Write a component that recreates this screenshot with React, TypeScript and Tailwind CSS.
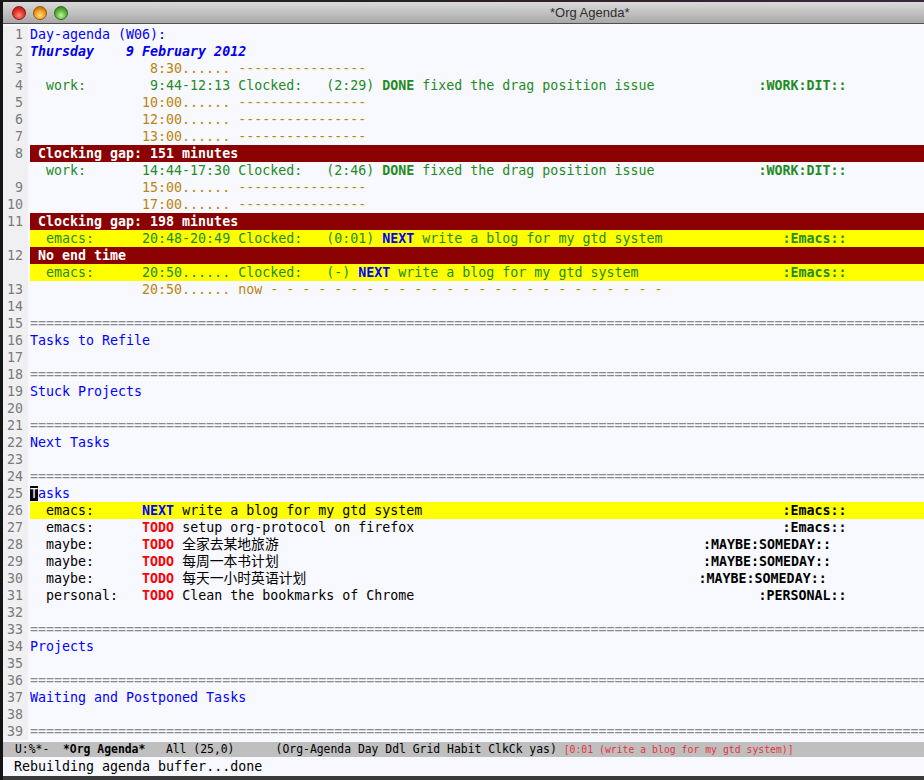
import React from "react";

const sp = (n: number) => " ".repeat(Math.max(0, n));
const TAG_END = 102;

function Row({
  n,
  bg = "",
  children,
}: {
  n?: number;
  bg?: string;
  children?: React.ReactNode;
}) {
  return (
    <div className="flex h-[17px] shrink-0 leading-[17px]">
      <div className="w-[25px] shrink-0 bg-[#f0f0f2] pr-[5px] text-right text-[#7a7a7a]">
        {n}
      </div>
      <div className="w-[2px] shrink-0" />
      <div className={`flex-1 overflow-hidden whitespace-pre ${bg}`}>
        {children}
      </div>
    </div>
  );
}

function Grid({ n, time }: { n: number; time: string }) {
  return (
    <Row n={n}>
      <span className="text-[#b8860b]">
        {(time + "......").padStart(25) + " " + "-".repeat(16)}
      </span>
    </Row>
  );
}

function Sep({ n }: { n: number }) {
  return (
    <Row n={n}>
      <span className="text-[#8a8a8a]">{"=".repeat(112)}</span>
    </Row>
  );
}

function Header({ n, text }: { n: number; text: string }) {
  return (
    <Row n={n}>
      <span className="text-[#0000ff]">{text}</span>
    </Row>
  );
}

function Gap({ n, text }: { n: number; text: string }) {
  return (
    <Row n={n} bg="bg-[#8b0000]">
      <span className="font-bold text-white">{" " + text}</span>
    </Row>
  );
}

function Clock({
  who,
  range,
  dur,
  kw,
  title,
  tag,
  yellow = false,
}: {
  who: string;
  range: string;
  dur: string;
  kw: "DONE" | "NEXT";
  title: string;
  tag: string;
  yellow?: boolean;
}) {
  const prefix =
    "  " + (who + ":").padEnd(12) + range.padStart(11) + " Clocked:   " + dur + " ";
  const used = prefix.length + kw.length + 1 + title.length;
  return (
    <Row bg={yellow ? "bg-[#ffff00]" : ""}>
      <span className="text-[#228b22]">{prefix}</span>
      <span
        className={
          kw === "NEXT" ? "font-bold text-[#0000ff]" : "font-bold text-[#228b22]"
        }
      >
        {kw}
      </span>
      <span className="text-[#228b22]">
        {" " + title + sp(TAG_END - tag.length - used)}
      </span>
      <span className="font-bold text-[#228b22]">{tag}</span>
    </Row>
  );
}

function Task({
  n,
  who,
  kw,
  title,
  tag,
  cjk = false,
  pad,
  yellow = false,
}: {
  n: number;
  who: string;
  kw: "TODO" | "NEXT";
  title: string;
  tag: string;
  cjk?: boolean;
  pad?: number;
  yellow?: boolean;
}) {
  const spaces = pad ?? TAG_END - tag.length - (19 + title.length);
  return (
    <Row n={n} bg={yellow ? "bg-[#ffff00]" : ""}>
      <span className="text-black">{"  " + (who + ":").padEnd(12)}</span>
      <span
        className={
          kw === "NEXT" ? "font-bold text-[#0000ff]" : "font-bold text-[#ff0000]"
        }
      >
        {kw}
      </span>
      <span className="text-black"> </span>
      {cjk ? (
        <span className="text-[13.8px] text-black">{title}</span>
      ) : (
        <span className="text-black">{title}</span>
      )}
      <span>{sp(spaces)}</span>
      <span className="font-bold text-black">{tag}</span>
    </Row>
  );
}

function Light({ color }: { color: string }) {
  return <div className={`h-[14px] w-[14px] rounded-full ${color}`} />;
}

export default function App() {
  return (
    <div className="flex h-[780px] w-[924px] flex-col overflow-hidden bg-[#3a3a3a]">
      <div className="h-[2px] shrink-0 bg-[linear-gradient(90deg,#1c1c1c,#3a2438)]" />
      <div className="flex flex-1 overflow-hidden">
        <div className="w-[3px] shrink-0 bg-[#141414]" />
        <div className="flex w-[921px] flex-col">
          {/* title bar */}
          <div className="flex h-[22px] shrink-0 items-center border-b border-[#4f4f4f] bg-[linear-gradient(180deg,#dadada,#a8a8a8)] pl-[9px]">
            <div className="flex gap-[7px]">
              <Light color="border border-[#8a1a14] bg-[radial-gradient(circle_at_50%_70%,#ff8c7a_0%,#e2342a_50%,#9c150f_100%)]" />
              <Light color="border border-[#9a5a08] bg-[radial-gradient(circle_at_50%_70%,#ffe08a_0%,#f09a1a_50%,#a45c08_100%)]" />
              <Light color="border border-[#2f6e1c] bg-[radial-gradient(circle_at_50%_70%,#c6f29a_0%,#5cb63a_50%,#2d6d18_100%)]" />
            </div>
            <span className="ml-[482px] font-['Liberation_Sans',sans-serif] text-[13px] text-[#2e2e2e]">
              *Org Agenda*
            </span>
          </div>

          {/* buffer */}
          <div className="flex h-[718px] shrink-0 flex-col overflow-hidden bg-[#f8f8ff] pt-[2px] font-['DejaVu_Sans_Mono','Noto_Sans_CJK_SC',monospace] text-[13.3px]">
            <Header n={1} text="Day-agenda (W06):" />
            <Row n={2}>
              <span className="font-bold italic text-[#0000ee]">
                Thursday    9 February 2012
              </span>
            </Row>
            <Grid n={3} time="8:30" />
            <Row n={4}>
              <span className="text-[#228b22]">
                {"  work:        9:44-12:13 Clocked:   (2:29) "}
              </span>
              <span className="font-bold text-[#228b22]">DONE</span>
              <span className="text-[#228b22]">
                {" fixed the drag position issue" + sp(13)}
              </span>
              <span className="font-bold text-[#228b22]">:WORK:DIT::</span>
            </Row>
            <Grid n={5} time="10:00" />
            <Grid n={6} time="12:00" />
            <Grid n={7} time="13:00" />
            <Gap n={8} text="Clocking gap: 151 minutes" />
            <Clock
              who="work"
              range="14:44-17:30"
              dur="(2:46)"
              kw="DONE"
              title="fixed the drag position issue"
              tag=":WORK:DIT::"
            />
            <Grid n={9} time="15:00" />
            <Grid n={10} time="17:00" />
            <Gap n={11} text="Clocking gap: 198 minutes" />
            <Clock
              who="emacs"
              range="20:48-20:49"
              dur="(0:01)"
              kw="NEXT"
              title="write a blog for my gtd system"
              tag=":Emacs::"
              yellow
            />
            <Gap n={12} text="No end time" />
            <Clock
              who="emacs"
              range="20:50......"
              dur="(-)"
              kw="NEXT"
              title="write a blog for my gtd system"
              tag=":Emacs::"
              yellow
            />
            <Row n={13}>
              <span className="text-[#b8860b]">
                {"20:50......".padStart(25) + " now" + " -".repeat(25)}
              </span>
            </Row>
            <Row n={14} />
            <Sep n={15} />
            <Header n={16} text="Tasks to Refile" />
            <Row n={17} />
            <Sep n={18} />
            <Header n={19} text="Stuck Projects" />
            <Row n={20} />
            <Sep n={21} />
            <Header n={22} text="Next Tasks" />
            <Row n={23} />
            <Sep n={24} />
            <Row n={25}>
              <span className="bg-black text-[#f8f8ff]">T</span>
              <span className="text-[#0000ff]">asks</span>
            </Row>
            <Task
              n={26}
              who="emacs"
              kw="NEXT"
              title="write a blog for my gtd system"
              tag=":Emacs::"
              yellow
            />
            <Task
              n={27}
              who="emacs"
              kw="TODO"
              title="setup org-protocol on firefox"
              tag=":Emacs::"
            />
            <Task
              n={28}
              who="maybe"
              kw="TODO"
              title="全家去某地旅游"
              tag=":MAYBE:SOMEDAY::"
              cjk
              pad={53}
            />
            <Task
              n={29}
              who="maybe"
              kw="TODO"
              title="每周一本书计划"
              tag=":MAYBE:SOMEDAY::"
              cjk
              pad={53}
            />
            <Task
              n={30}
              who="maybe"
              kw="TODO"
              title="每天一小时英语计划"
              tag=":MAYBE:SOMEDAY::"
              cjk
              pad={49}
            />
            <Task
              n={31}
              who="personal"
              kw="TODO"
              title="Clean the bookmarks of Chrome"
              tag=":PERSONAL::"
            />
            <Row n={32} />
            <Sep n={33} />
            <Header n={34} text="Projects" />
            <Row n={35} />
            <Sep n={36} />
            <Header n={37} text="Waiting and Postponed Tasks" />
            <Row n={38} />
            <Sep n={39} />
          </div>

          {/* mode line */}
          <div className="h-[15px] shrink-0 overflow-hidden whitespace-pre bg-[#bfbfbf] pl-[12px] font-['DejaVu_Sans_Mono',monospace] text-[11.4px] leading-[15px] text-black">
            <span>{"U:%*-  "}</span>
            <span className="font-bold">*Org Agenda*</span>
            <span>
              {"   All (25,0)      (Org-Agenda Day Ddl Grid Habit ClkCk yas) "}
            </span>
            <span className="text-[9.8px] text-[#e8323c]">
              [0:01 (write a blog for my gtd system)]
            </span>
          </div>

          {/* echo area */}
          <div className="h-[19px] shrink-0 whitespace-pre bg-[#f8f8ff] pl-[11px] font-['DejaVu_Sans_Mono',monospace] text-[13.3px] leading-[19px] text-black">
            Rebuilding agenda buffer...done
          </div>
        </div>
      </div>
    </div>
  );
}
